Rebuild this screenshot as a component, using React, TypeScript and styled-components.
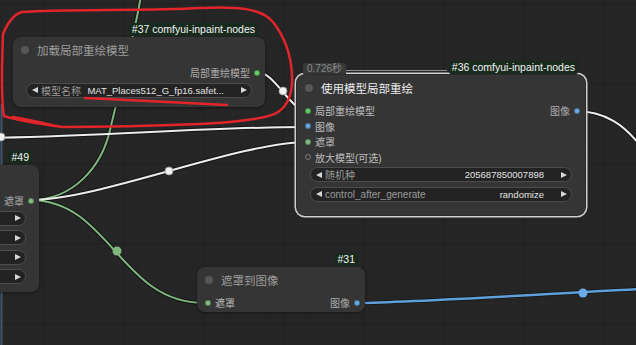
import styled, { createGlobalStyle } from "styled-components";

const GlobalStyle = createGlobalStyle`
  html, body {
    margin: 0;
    padding: 0;
    background: #242424;
  }
  body {
    font-family: "Liberation Sans", "Noto Sans CJK SC", sans-serif;
  }
`;

const Canvas = styled.div`
  position: relative;
  width: 636px;
  height: 345px;
  overflow: hidden;
  background-color: #252525;
  background-image: linear-gradient(#1f1f1f 1px, transparent 1px),
    linear-gradient(90deg, #1f1f1f 1px, transparent 1px),
    linear-gradient(#272727 1px, transparent 1px),
    linear-gradient(90deg, #272727 1px, transparent 1px);
  background-size: 80px 80px, 80px 80px, 10px 10px, 10px 10px;
  background-position: 43px 3px, 43px 3px, 3px 3px, 3px 3px;
`;

const Layer = styled.svg<{ $top?: boolean }>`
  position: absolute;
  left: 0;
  top: 0;
  width: 636px;
  height: 345px;
  pointer-events: none;
  z-index: ${(p) => (p.$top ? 10 : 0)};
`;

// nodes sit on a free canvas, so their place is the content
const Node = styled.div<{ $x: number; $y: number; $w: number; $pb: number; $selected?: boolean }>`
  position: absolute;
  left: ${(p) => p.$x}px;
  top: ${(p) => p.$y}px;
  width: ${(p) => p.$w}px;
  padding-bottom: ${(p) => p.$pb}px;
  background: #353535;
  border-radius: 8px;
  display: flex;
  flex-direction: column;
  z-index: 2;
  box-shadow: ${(p) =>
    p.$selected
      ? "0 0 0 1px #2a2a2a, 0 0 0 2.5px #cfcfcf"
      : "0 1px 3px rgba(0, 0, 0, 0.45)"};
`;

const Header = styled.div`
  position: absolute;
  left: 6px;
  right: 7px;
  bottom: 100%;
  margin-bottom: 1px;
  display: flex;
  align-items: flex-end;
  justify-content: flex-end;
`;

const Badge = styled.div`
  height: 13px;
  line-height: 13px;
  padding: 0 3px;
  background: #182a1e;
  color: #f4f4f4;
  font-size: 10.5px;
  border-radius: 2px;
  white-space: nowrap;
`;

const TimeTab = styled.div`
  height: 11px;
  line-height: 11px;
  padding: 0 4px;
  background: #383838;
  color: #8a8a8a;
  font-size: 10px;
  border-radius: 3px 3px 0 0;
  white-space: nowrap;
`;

const TimeLine = styled.div`
  flex: 1;
  height: 1px;
  margin: 0 2px 3px 0;
  background: #8c8c8c;
`;

const Title = styled.div<{ $bright?: boolean }>`
  height: 26px;
  display: flex;
  align-items: center;
  gap: 8px;
  padding-left: 8px;
  font-size: 11.5px;
  color: ${(p) => (p.$bright ? "#ececec" : "#9c9c9c")};
  white-space: nowrap;
`;

const TitleDot = styled.span`
  flex: none;
  width: 8px;
  height: 8px;
  border-radius: 50%;
  background: #575757;
`;

const Slots = styled.div`
  padding-top: 2px;
  display: flex;
  flex-direction: column;
`;

const SlotRow = styled.div`
  height: 15.5px;
  display: flex;
  align-items: center;
  justify-content: space-between;
`;

const Slot = styled.div<{ $out?: boolean }>`
  display: flex;
  align-items: center;
  gap: 4px;
  flex-direction: ${(p) => (p.$out ? "row-reverse" : "row")};
  padding: ${(p) => (p.$out ? "0 5px 0 0" : "0 0 0 8px")};
  margin-left: ${(p) => (p.$out ? "auto" : "0")};
  font-size: 10px;
  color: ${(p) => (p.$out ? "#ababab" : "#bdbdbd")};
  white-space: nowrap;
`;

const Dot = styled.span<{ $color: string; $hollow?: boolean }>`
  flex: none;
  width: 6px;
  height: 6px;
  box-sizing: border-box;
  border-radius: 50%;
  background: ${(p) => (p.$hollow ? "transparent" : p.$color)};
  border: ${(p) => (p.$hollow ? `1.5px solid ${p.$color}` : "1px solid rgba(0,0,0,0.3)")};
`;

const Widgets = styled.div`
  margin-top: 2px;
  padding: 0 13px;
  display: flex;
  flex-direction: column;
  gap: 4.5px;
`;

const Widget = styled.div`
  height: 15px;
  box-sizing: border-box;
  border: 1px solid #4c4c4c;
  border-radius: 8px;
  background: #232323;
  display: flex;
  align-items: center;
  gap: 3px;
  padding: 0 4px 0 5px;
`;

const Arrow = styled.span<{ $dir: "left" | "right" }>`
  flex: none;
  width: 0;
  height: 0;
  border-top: 3.5px solid transparent;
  border-bottom: 3.5px solid transparent;
  ${(p) =>
    p.$dir === "left"
      ? "border-right: 6px solid #d6d6d6;"
      : "border-left: 6px solid #d6d6d6;"}
`;

const WLabel = styled.span`
  color: #9a9a9a;
  font-size: 10px;
  white-space: nowrap;
`;

const WValue = styled.span`
  flex: 1;
  margin-right: 14px;
  text-align: right;
  color: #e2e2e2;
  font-size: 9.5px;
  white-space: nowrap;
  overflow: hidden;
`;

const GREEN = "#66cf66";
const MASK = "#84c084";
const BLUE = "#68aae6";

type WidgetSpec = { label: string; value: string };

function WidgetBox({ label, value }: WidgetSpec) {
  return (
    <Widget>
      <Arrow $dir="left" />
      <WLabel>{label}</WLabel>
      <WValue>{value}</WValue>
      <Arrow $dir="right" />
    </Widget>
  );
}

function Wires() {
  return (
    <Layer viewBox="0 0 636 345">
      <g fill="none" strokeLinecap="round">
        {/* dark underlay */}
        <g stroke="rgba(0,0,0,0.45)" strokeWidth="4">
          <path d="M30,200 C75,200 102,165 110,130 S135,35 141,-5" />
          <path d="M30,200 C110,200 120,303 204,303" />
          <path d="M30,200 C100,200 238,142 308,142" />
          <path d="M-20,138 C100,137 200,127 308,127" />
          <path d="M257,72 C275,72 290,111 308,111" />
          <path d="M575,111 C605,111 625,125 642,148" />
          <path d="M357,303 C420,302 560,293 642,289" />
        </g>
        <path d="M1.5,105 L1.5,345" stroke="#3e5870" strokeWidth="2" />
        <path d="M30,200 C75,200 102,165 110,130 S135,35 141,-5" stroke="#7eb67e" strokeWidth="2" />
        <path d="M30,200 C110,200 120,303 204,303" stroke="#7eb67e" strokeWidth="2" />
        <path d="M30,200 C100,200 238,142 308,142" stroke="#ececec" strokeWidth="2" />
        <path d="M-20,138 C100,137 200,127 308,127" stroke="#ececec" strokeWidth="2" />
        <path d="M257,72 C275,72 290,111 308,111" stroke="#ececec" strokeWidth="2" />
        <path d="M575,111 C605,111 625,125 642,148" stroke="#ececec" strokeWidth="2" />
        <path d="M357,303 C420,302 560,293 642,289" stroke="#5f9fdc" strokeWidth="2.5" />
      </g>
      <circle cx="117" cy="251" r="4.5" fill="#7eb67e" />
      <circle cx="169" cy="171" r="4" fill="#f0f0f0" stroke="#999" strokeWidth="0.8" />
      <circle cx="1" cy="137" r="4" fill="#f0f0f0" stroke="#999" strokeWidth="0.8" />
      <circle cx="283" cy="91" r="4" fill="#f0f0f0" stroke="#999" strokeWidth="0.8" />
      <circle cx="583" cy="293" r="4.5" fill="#6aaae6" />
    </Layer>
  );
}

function Annotation() {
  return (
    <Layer $top viewBox="0 0 636 345">
      <g fill="none" stroke="#e2252a" strokeWidth="2.5" strokeLinecap="round" strokeLinejoin="round">
        <path d="M3,34 C8,22 14,14 22,12 C60,9 150,11 200,8 C240,6 262,9 273,22 C284,36 291,55 292,75 C293,95 287,106 278,112 C268,119 240,122 200,124 C150,126 90,127 63,127 C40,124 20,121 4,116 C1,100 2,60 3,34" />
        <path d="M13,117 C25,119 38,122 52,125" />
        <path d="M85,98 C130,100 190,103 227,105" />
      </g>
    </Layer>
  );
}

export default function App() {
  return (
    <>
      <GlobalStyle />
      <Canvas>
        <Wires />

        <Node $x={13} $y={37} $w={252} $pb={9.5}>
          <Header>
            <Badge>#37 comfyui-inpaint-nodes</Badge>
          </Header>
          <Title>
            <TitleDot />
            加载局部重绘模型
          </Title>
          <Slots>
            <SlotRow>
              <Slot $out>
                <Dot $color={GREEN} />
                局部重绘模型
              </Slot>
            </SlotRow>
          </Slots>
          <Widgets>
            <WidgetBox label="模型名称" value="MAT_Places512_G_fp16.safet..." />
          </Widgets>
        </Node>

        <Node $x={297} $y={75} $w={288} $pb={13} $selected>
          <Header>
            <TimeTab>0.726秒</TimeTab>
            <TimeLine />
            <Badge>#36 comfyui-inpaint-nodes</Badge>
          </Header>
          <Title $bright>
            <TitleDot />
            使用模型局部重绘
          </Title>
          <Slots>
            <SlotRow>
              <Slot>
                <Dot $color={GREEN} />
                局部重绘模型
              </Slot>
              <Slot $out>
                <Dot $color={BLUE} />
                图像
              </Slot>
            </SlotRow>
            <SlotRow>
              <Slot>
                <Dot $color={BLUE} />
                图像
              </Slot>
            </SlotRow>
            <SlotRow>
              <Slot>
                <Dot $color={MASK} />
                遮罩
              </Slot>
            </SlotRow>
            <SlotRow>
              <Slot>
                <Dot $color="#7a7a7a" $hollow />
                放大模型(可选)
              </Slot>
            </SlotRow>
          </Slots>
          <Widgets>
            <WidgetBox label="随机种" value="205687850007898" />
            <WidgetBox label="control_after_generate" value="randomize" />
          </Widgets>
        </Node>

        <Node $x={-150} $y={165} $w={189} $pb={8}>
          <Header>
            <Badge>#49</Badge>
          </Header>
          <Title>
            <TitleDot />
          </Title>
          <Slots>
            <SlotRow>
              <Slot $out>
                <Dot $color={MASK} />
                遮罩
              </Slot>
            </SlotRow>
          </Slots>
          <Widgets>
            <WidgetBox label="" value="" />
            <WidgetBox label="" value="" />
            <WidgetBox label="" value="" />
            <WidgetBox label="" value="" />
          </Widgets>
        </Node>

        <Node $x={197} $y={267} $w={168} $pb={1.5}>
          <Header>
            <Badge>#31</Badge>
          </Header>
          <Title>
            <TitleDot />
            遮罩到图像
          </Title>
          <Slots>
            <SlotRow>
              <Slot>
                <Dot $color={MASK} />
                遮罩
              </Slot>
              <Slot $out>
                <Dot $color={BLUE} />
                图像
              </Slot>
            </SlotRow>
          </Slots>
        </Node>

        <Annotation />
      </Canvas>
    </>
  );
}
